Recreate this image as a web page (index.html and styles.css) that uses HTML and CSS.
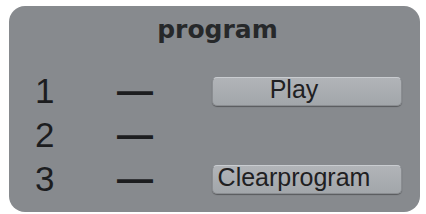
FILE: index.html
```html
<!DOCTYPE html>
<html lang="en">
<head>
    <meta charset="UTF-8">
    <meta name="viewport" content="width=device-width, initial-scale=1.0">
    <title>program</title>
    <link rel="stylesheet" href="styles.css">
</head>
<body>
    <section class="panel">
        <h1 class="title">program</h1>
        <div class="steps">
            <span class="num">1</span>
            <span class="dash">—</span>
            <button class="btn" type="button">Play</button>

            <span class="num">2</span>
            <span class="dash">—</span>
            <span></span>

            <span class="num">3</span>
            <span class="dash">—</span>
            <button class="btn" type="button">Clearprogram</button>
        </div>
    </section>
</body>
</html>
```

FILE: styles.css
```css
body {
    margin: 0;
    padding: 6px 0 0 9px;
    background-color: #ffffff;
    font-family: "Liberation Sans", Arial, sans-serif;
}
.panel {
    box-sizing: border-box;
    width: 411px;
    height: 206px;
    padding: 10px 0 0 26px;
    background-color: #878a8e;
    border-radius: 16px;
}
.title {
    margin: 0 0 25px -20px;
    font-family: "DejaVu Sans", sans-serif;
    font-weight: bold;
    font-size: 25px;
    line-height: 28px;
    text-align: center;
    color: #26282a;
}
.steps {
    display: grid;
    grid-template-columns: 82px 95px 190px;
    grid-auto-rows: 44px;
    align-items: center;
}
.num,
.dash {
    font-size: 35px;
    line-height: 44px;
    color: #1c1d1f;
}
.dash {
    font-weight: bold;
    font-size: 36px;
}
.btn {
    box-sizing: border-box;
    height: 29px;
    padding: 0 26px 5px 0;
    font-family: "Liberation Sans", Arial, sans-serif;
    font-size: 25px;
    line-height: 22px;
    color: #1f2022;
    background: linear-gradient(#b1b4b8, #a2a6aa);
    border: 1px solid #8a8d91;
    border-top-color: #c9ccd0;
    border-radius: 5px;
    box-shadow: 0 1px 1px rgba(0, 0, 0, 0.35);
    text-align: center;
    cursor: pointer;
}
```
